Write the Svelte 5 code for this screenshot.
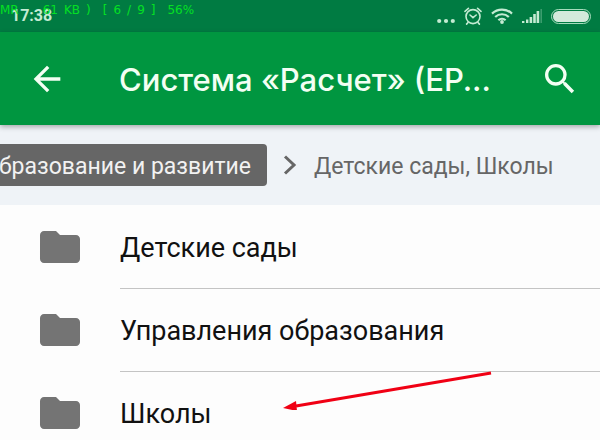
<script lang="ts">
	const folders = ['Детские сады', 'Управления образования', 'Школы'];
	const memory = [['MR'], ['61', 'KB', ')'], ['[', '6', '/', '9', ']'], ['56%']];
</script>

<div class="screen">
	<div class="status">
		<div class="memory">
			{#each memory as group}
				<div class="group">
					{#each group as part}<span>{part}</span>{/each}
				</div>
			{/each}
		</div>
		<time class="clock">17:38</time>
		<div class="indicators">
			<svg class="dots" viewBox="0 0 18 6" fill="currentColor">
				<circle cx="2.2" cy="3" r="2.1"/><circle cx="9" cy="3" r="2.1"/><circle cx="15.8" cy="3" r="2.1"/>
			</svg>
			<svg class="alarm" viewBox="0 0 18 18" fill="none" stroke="currentColor" stroke-width="1.6" stroke-linecap="round">
				<circle cx="9" cy="9.6" r="7"/>
				<path d="M6 8l3 2.6 3.2-2.6M1 4.4L4.4 1.4M17 4.4L13.6 1.4M4 15.5l-1.4 1.6M14 15.5l1.4 1.6"/>
			</svg>
			<svg class="wifi" viewBox="0 0 22 16" fill="none" stroke="currentColor" stroke-width="2.2">
				<path d="M1 5.6a14.4 14.4 0 0 1 20 0M4.2 9a9.8 9.8 0 0 1 13.6 0M7.4 12.2a5.2 5.2 0 0 1 7.2 0"/>
				<circle cx="11" cy="14" r="1.9" fill="currentColor" stroke="none"/>
			</svg>
			<svg class="signal" viewBox="0 0 20 14">
				<path fill="currentColor" d="M0 12h2.4v2H0zM4 10.4h2.4V14H4zM7.600 8h2.600v6H7.600zM11.200 5h2.600v9h-2.600zM14.600 2h2.600v12h-2.600z"/>
				<path fill="currentColor" opacity=".3" d="M18.400 0h1.600v14h-1.600z"/>
			</svg>
			<div class="battery"><div class="charge"></div></div>
		</div>
	</div>

	<header class="toolbar">
		<button class="icon-btn" aria-label="Назад">
			<svg viewBox="0 0 24 24" fill="currentColor"><path d="M20 11H7.830l5.590-5.590L12 4l-8 8 8 8 1.410-1.410L7.830 13H20v-2z"/></svg>
		</button>
		<h1>Система «Расчет» (ЕР...</h1>
		<button class="icon-btn" aria-label="Поиск">
			<svg viewBox="0 0 24 24" fill="currentColor"><path d="M15.500 14h-.79l-.28-.27A6.471 6.471 0 0 0 16 9.500 6.500 6.500 0 1 0 9.500 16c1.610 0 3.090-.59 4.230-1.570l.27.28v.79l5 4.990L20.490 19l-4.990-5zm-6 0C7.010 14 5 11.990 5 9.500S7.010 5 9.500 5 14 7.010 14 9.500 11.990 14 9.500 14z"/></svg>
		</button>
	</header>

	<nav class="crumbs">
		<div class="previous"><a href="#development">Образование и развитие</a></div>
		<svg class="chevron" viewBox="0 0 14 20" fill="none" stroke="currentColor" stroke-width="3"><path d="M2 1.500l9 8.500-9 8.500"/></svg>
		<span class="current">Детские сады, Школы</span>
	</nav>

	<ul class="folders">
		{#each folders as name}
			<li>
				<svg class="folder" viewBox="0 0 24 24" fill="currentColor"><path d="M10 4H4c-1.100 0-1.990.9-1.990 2L2 18c0 1.100.9 2 2 2h16c1.100 0 2-.9 2-2V8c0-1.100-.9-2-2-2h-8l-2-2z"/></svg>
				<a href="#folder">{name}</a>
			</li>
		{/each}
	</ul>

	<svg class="pointer" viewBox="0 0 210 40">
		<path d="M209 3L14 36" stroke="#f00014" stroke-width="3"/>
		<path d="M1 38l13-7 1 10z" fill="#f00014"/>
	</svg>
</div>

<style>
	:global(body) { margin: 0; background: #fdfdfd; }

	.screen {
		position: relative;
		height: 100vh; overflow: hidden;
		font-family: Roboto, "Noto Sans", sans-serif;
	}

	.status {
		position: relative;
		display: flex; align-items: center; justify-content: space-between;
		box-sizing: border-box; height: 32px;
		padding: 0 9px 0 11px;
		background: #007b42; color: #c4ebd3;
	}
	.clock { font-size: 16px; font-weight: 700; line-height: 20px; }
	.memory {
		position: absolute; top: 2px; left: 0;
		display: flex; gap: 12px;
		font: 12px/16px "DejaVu Sans", sans-serif;
		color: #05e023;
	}
	.group { display: flex; gap: 6px; }
	.group:first-child { margin-right: 12px; }

	.indicators { display: flex; align-items: center; gap: 9px; }
	.indicators svg { display: block; }
	.dots { width: 18px; height: 6px; padding-top: 10px; }
	.alarm { width: 18px; height: 18px; }
	.wifi { width: 22px; height: 16px; }
	.signal { width: 20px; height: 14px; }
	.battery {
		box-sizing: border-box; width: 40px; height: 15px;
		padding: 1px; border: 1px solid #a6dcbd; border-radius: 8px;
	}
	.charge { height: 100%; border-radius: 6px; background: #d3eadb; }

	.toolbar {
		position: relative; z-index: 1;
		display: flex; align-items: center;
		height: 93px; padding: 0 20px 0 27px;
		background: #009640; color: #f3fff3;
		box-shadow: 0 2px 5px rgba(0,0,0,.3);
	}
	.toolbar h1 {
		flex: 1; margin: 0 0 0 52px; padding-top: 2px;
		font-family: Inter, Roboto, sans-serif;
		font-size: 31px; font-weight: 500; line-height: 40px;
		white-space: nowrap;
	}
	.icon-btn {
		width: 40px; height: 40px; padding: 0;
		border: none; background: none; color: inherit; cursor: pointer;
	}
	.icon-btn svg { display: block; width: 40px; height: 40px; }

	.crumbs {
		display: flex; align-items: center;
		height: 80px;
		background: #eff3f7; color: #666;
		font-size: 23px; line-height: 38px; white-space: nowrap;
	}
	/* scrolled to the end, so the first crumb runs off the left edge */
	.previous {
		display: flex; justify-content: flex-end;
		box-sizing: border-box; width: 267px; padding: 4px 16px 0 0;
		overflow: hidden;
		background: #666; border-radius: 0 4px 4px 0;
	}
	.previous a { color: #f2f2f2; text-decoration: none; }
	.current { padding-top: 4px; }
	.chevron { width: 14px; height: 20px; margin: 0 17px 0 16px; }

	.folders { margin: 0; padding: 0; list-style: none; }
	.folders li { display: flex; align-items: center; height: 83px; }
	.folder { width: 48px; height: 48px; margin: 0 36px; color: #747474; }
	.folders a {
		flex: 1; padding-top: 4px;
		border-bottom: 1px solid #c4c4c4;
		font-size: 27px; line-height: 80px;
		color: #111; text-decoration: none;
	}

	.pointer {
		position: absolute; top: 370px; left: 282px;
		width: 210px; height: 40px;
	}
</style>
